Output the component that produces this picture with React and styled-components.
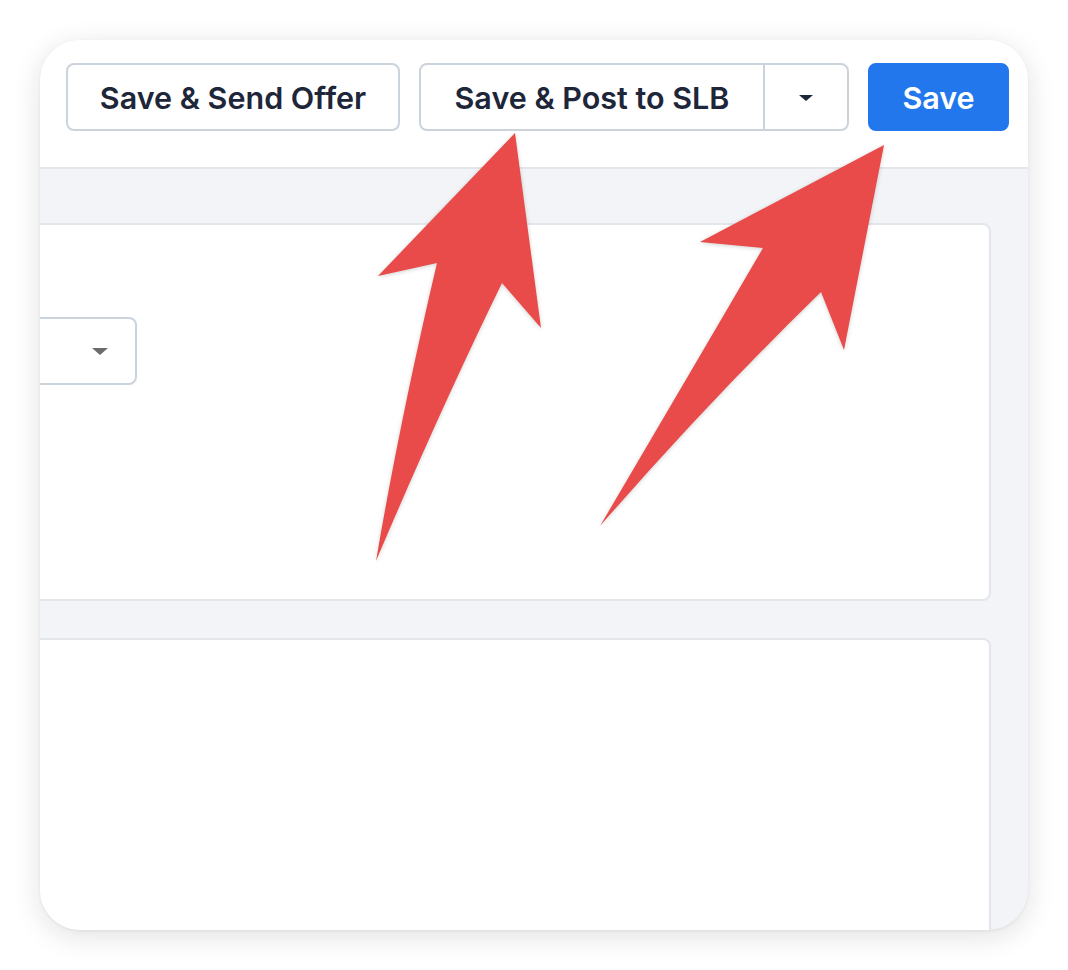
import React from 'react';
import styled, { createGlobalStyle } from 'styled-components';

const GlobalStyle = createGlobalStyle`
    html, body {
        margin: 0;
        padding: 0;
        background: #ffffff;
        font-family: Inter, "Noto Sans", sans-serif;
    }
`;

const Page = styled.div`
    position: relative;
    width: 1068px;
    height: 970px;
    padding: 40px;
    box-sizing: border-box;
`;

const Card = styled.div`
    width: 988px;
    height: 890px;
    border-radius: 40px;
    overflow: hidden;
    background: #f3f4f8;
    box-shadow: 0 6px 28px rgba(20, 25, 40, 0.13), 0 1px 3px rgba(20, 25, 40, 0.06);
    display: flex;
    flex-direction: column;
`;

const Toolbar = styled.div`
    height: 129px;
    flex-shrink: 0;
    box-sizing: border-box;
    background: #ffffff;
    border-bottom: 2px solid #e3e6eb;
    display: flex;
    justify-content: flex-end;
    align-items: flex-start;
    gap: 19px;
    padding: 23px 19px 0 0;
`;

const Button = styled.button`
    height: 68px;
    box-sizing: border-box;
    padding: 0;
    border-radius: 8px;
    border: 2px solid ${p => (p.$primary ? '#2377ec' : '#cbd3dc')};
    background: ${p => (p.$primary ? '#2377ec' : '#ffffff')};
    color: ${p => (p.$primary ? '#ffffff' : '#1e2639')};
    font-family: Inter, "Noto Sans", sans-serif;
    font-size: 30.5px;
    font-weight: 600;
    display: flex;
    align-items: center;
    justify-content: center;
    width: ${p => p.$w}px;
`;

const SplitGroup = styled.div`
    display: flex;
    height: 68px;
    box-sizing: border-box;
    border: 2px solid #cbd3dc;
    border-radius: 8px;
    background: #ffffff;
`;

const SplitMain = styled.div`
    width: 342px;
    display: flex;
    align-items: center;
    justify-content: center;
    color: #1e2639;
    font-size: 30.5px;
    font-weight: 600;
    border-right: 2px solid #cbd3dc;
`;

const SplitCaret = styled.div`
    width: 82px;
    display: flex;
    align-items: center;
    justify-content: center;
    padding-top: 2px;
`;

const Caret = styled.span`
    width: 0;
    height: 0;
    border-left: ${p => p.$size}px solid transparent;
    border-right: ${p => p.$size}px solid transparent;
    border-top: ${p => p.$size * 0.9}px solid ${p => p.$color};
`;

const Content = styled.div`
    flex: 1;
    display: flex;
    flex-direction: column;
    gap: 37px;
    padding: 54px 37px 0 0;
    margin-left: -40px;
`;

const Panel = styled.div`
    flex-shrink: 0;
    height: ${p => p.$h}px;
    box-sizing: border-box;
    background: #ffffff;
    border: 2px solid #e3e6eb;
    border-radius: 8px;
    padding-top: 92px;
`;

const Select = styled.div`
    width: 137px;
    height: 68px;
    box-sizing: border-box;
    border: 2px solid #cbd3dc;
    border-radius: 8px;
    margin-left: -2px;
    display: flex;
    align-items: center;
    justify-content: flex-end;
    padding-right: 27px;
`;

const ArrowLayer = styled.svg`
    position: absolute;
    left: 0;
    top: 0;
    pointer-events: none;
    filter: drop-shadow(0 1px 2px rgba(0, 0, 0, 0.18));
`;

const Arrows = () => (
    <ArrowLayer width="1068" height="970" viewBox="0 0 1068 970">
        <path
            d="M515 133 L541 328 L502 283 Q440 410 376 561 Q400 420 437 263 L378 276 Z"
            fill="#e84b49"
        />
        <path
            d="M884 145 L844 350 L821 292 Q710 400 600 526 Q680 390 763 248 L700 242 Z"
            fill="#e84b49"
        />
    </ArrowLayer>
);

export default function App() {
    return (
        <Page>
            <GlobalStyle />
            <Card>
                <Toolbar>
                    <Button $w={334}>Save &amp; Send Offer</Button>
                    <SplitGroup>
                        <SplitMain>Save &amp; Post to SLB</SplitMain>
                        <SplitCaret>
                            <Caret $size={7} $color="#1e2639" />
                        </SplitCaret>
                    </SplitGroup>
                    <Button $primary $w={141}>Save</Button>
                </Toolbar>
                <Content>
                    <Panel $h={378}>
                        <Select>
                            <Caret $size={8.5} $color="#6b6b6b" />
                        </Select>
                    </Panel>
                    <Panel $h={400} />
                </Content>
            </Card>
            <Arrows />
        </Page>
    );
}
